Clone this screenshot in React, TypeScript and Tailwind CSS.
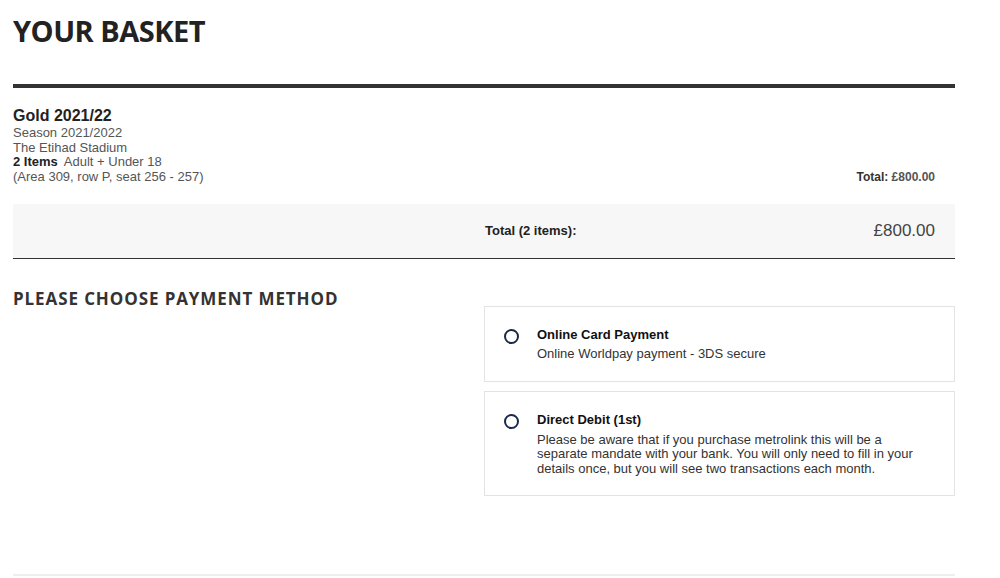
import React from "react";

const METHODS = [
  {
    title: "Online Card Payment",
    desc: "Online Worldpay payment - 3DS secure",
  },
  {
    title: "Direct Debit (1st)",
    desc: "Please be aware that if you purchase metrolink this will be a separate mandate with your bank. You will only need to fill in your details once, but you will see two transactions each month.",
  },
];

function Radio() {
  return <span className="mt-[1px] block w-[15px] h-[15px] rounded-full border-2 border-[#1a2a4a] flex-shrink-0" />;
}

export default function App() {
  return (
    <div className="w-[1000px] h-[578px] bg-white overflow-hidden font-['Liberation_Sans',Arial,sans-serif] text-[#333]">
      <div className="ml-[13px] w-[942px]">
        <h1 className="pt-[13px] text-[29px] leading-[36px] font-bold tracking-[-0.5px] text-[#222] font-['Open_Sans',sans-serif]">
          YOUR BASKET
        </h1>

        <div className="mt-[35px] h-[4px] bg-[#333]" />

        {/* Basket item */}
        <div className="flex items-end justify-between pt-[18px] pr-[20px]">
          <div>
            <div className="text-[16px] leading-[19px] font-bold text-[#222] mb-[1px]">Gold 2021/22</div>
            <div className="text-[13px] leading-[14.7px] text-[#555]">
              <div>Season 2021/2022</div>
              <div>The Etihad Stadium</div>
              <div>
                <span className="font-bold text-[#222]">2 Items</span>
                <span className="ml-[6px]">Adult + Under 18</span>
              </div>
              <div>(Area 309, row P, seat 256 - 257)</div>
            </div>
          </div>
          <div className="text-[12px] leading-[14px] font-bold text-[#333] pb-[1px]">
            Total: <span className="text-[#555]">£800.00</span>
          </div>
        </div>

        {/* Summary */}
        <div className="mt-[19px] h-[55px] bg-[#f7f7f7] border-b border-[#333] grid grid-cols-2 items-center">
          <div />
          <div className="flex items-center justify-between pl-[1px] pr-[20px]">
            <span className="text-[13px] font-bold text-[#222]">Total (2 items):</span>
            <span className="text-[17px] text-[#444]">£800.00</span>
          </div>
        </div>

        {/* Payment */}
        <div className="grid grid-cols-2 mt-[30px]">
          <h2 className="text-[17px] leading-[20px] font-bold tracking-[0.9px] text-[#333] font-['Open_Sans',sans-serif]">
            PLEASE CHOOSE PAYMENT METHOD
          </h2>
          <div className="flex flex-col gap-[9px] mt-[17px]">
            {METHODS.map((m) => (
              <div key={m.title} className="border border-[#e3e3e3] flex gap-[18px] pl-[19px] pr-[30px] pt-[21px] pb-[19px]">
                <Radio />
                <div className="text-[13px] leading-[14.6px]">
                  <div className="font-bold text-[#111] mb-[5px]">{m.title}</div>
                  <div className="text-[#333]">{m.desc}</div>
                </div>
              </div>
            ))}
          </div>
        </div>

        <div className="mt-[78px] h-[2px] bg-[#eee]" />
      </div>
    </div>
  );
}
